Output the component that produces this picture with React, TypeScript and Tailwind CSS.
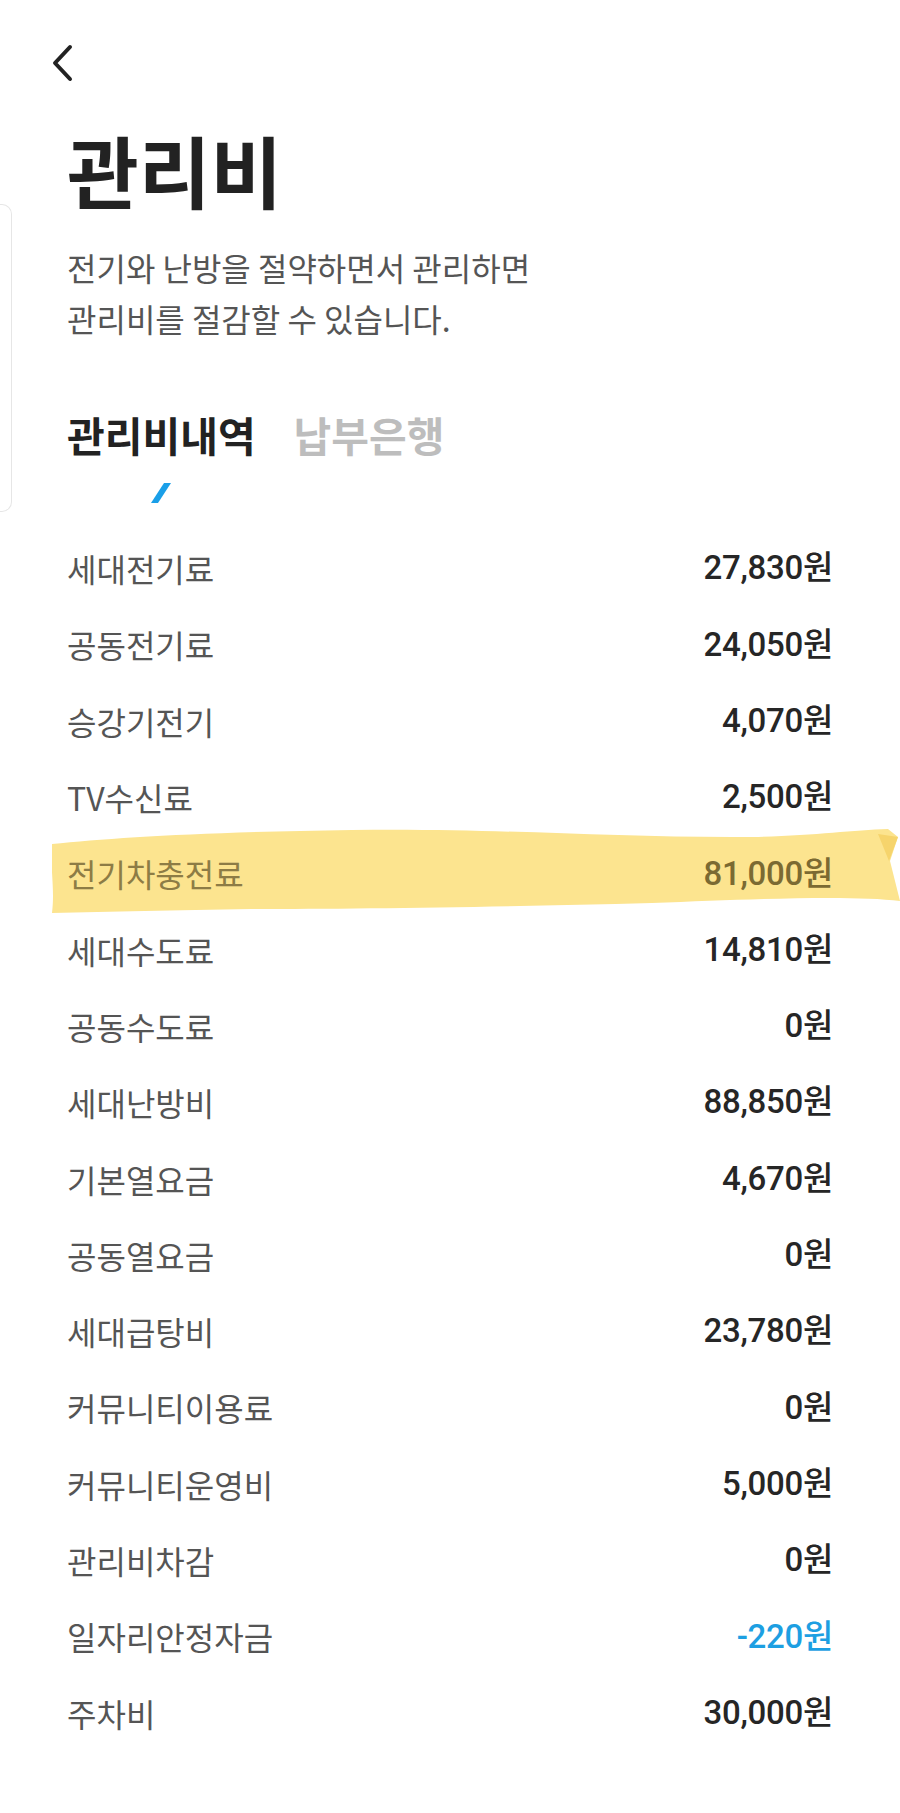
import React from "react";

type Fee = { label: string; amount: string; tone?: "blue" | "marked" };

const fees: Fee[] = [
  { label: "세대전기료", amount: "27,830원" },
  { label: "공동전기료", amount: "24,050원" },
  { label: "승강기전기", amount: "4,070원" },
  { label: "TV수신료", amount: "2,500원" },
  { label: "전기차충전료", amount: "81,000원", tone: "marked" },
  { label: "세대수도료", amount: "14,810원" },
  { label: "공동수도료", amount: "0원" },
  { label: "세대난방비", amount: "88,850원" },
  { label: "기본열요금", amount: "4,670원" },
  { label: "공동열요금", amount: "0원" },
  { label: "세대급탕비", amount: "23,780원" },
  { label: "커뮤니티이용료", amount: "0원" },
  { label: "커뮤니티운영비", amount: "5,000원" },
  { label: "관리비차감", amount: "0원" },
  { label: "일자리안정자금", amount: "-220원", tone: "blue" },
  { label: "주차비", amount: "30,000원" },
];

function Highlighter() {
  return (
    <svg
      className="absolute left-[-15px] right-[-67px] top-[-6px] h-[84px]"
      viewBox="0 0 848 84"
      preserveAspectRatio="none"
    >
      <path
        d="M0 15 C60 9 150 3 300 1 C450 -1 560 9 700 8 C760 7 800 1 836 0 L846 8 L838 32 L848 72 C800 66 700 70 600 74 C450 78 300 80 200 80 C120 81 60 83 0 84 C3 60 -2 40 0 15 Z"
        fill="#fce48f"
      />
      <path d="M826 5 L846 8 L837 32 Z" fill="#f6d46c" />
    </svg>
  );
}

function FeeRow({ fee }: { fee: Fee }) {
  const marked = fee.tone === "marked";
  const amountColor =
    fee.tone === "blue"
      ? "text-[#1d9fe2]"
      : marked
        ? "text-[#7b6a32]"
        : "text-[#262626]";

  return (
    <div className="relative flex h-[76.3px] items-center justify-between">
      {marked && <Highlighter />}
      <span
        className={`relative font-['Noto_Sans_CJK_KR',sans-serif] text-[32px] ${
          marked ? "text-[#8d7c45]" : "text-[#555555]"
        }`}
      >
        {fee.label}
      </span>
      <span
        className={`relative font-['Roboto','Noto_Sans_CJK_KR',sans-serif] text-[33px] font-medium tracking-[-0.3px] ${amountColor}`}
      >
        {fee.amount}
      </span>
    </div>
  );
}

export default function App() {
  return (
    <div className="relative min-h-[1813px] w-[900px] bg-white font-['Noto_Sans_CJK_KR',sans-serif]">
      {/* Edge panel handle */}
      <div className="absolute left-0 top-[204px] h-[308px] w-[12px] rounded-r-[10px] border border-l-0 border-[#e6e6e6]" />

      {/* Back */}
      <div className="pl-[50px] pt-[44px]">
        <svg width="24" height="38" viewBox="0 0 24 38" fill="none">
          <path
            d="M20 3 L5 19 L20 35"
            stroke="#222"
            strokeWidth="4"
            strokeLinecap="round"
            strokeLinejoin="round"
          />
        </svg>
      </div>

      <div className="px-[67px]">
        <h1 className="mt-[48px] text-[78px] font-bold leading-none text-[#222222]">
          관리비
        </h1>

        <p className="mt-[34px] text-[32px] leading-[51px] text-[#555555]">
          전기와 난방을 절약하면서 관리하면
          <br />
          관리비를 절감할 수 있습니다.
        </p>

        {/* Tabs */}
        <div className="mt-[70px] flex items-center gap-[38px] text-[41px] font-bold leading-none">
          <span className="text-[#222222]">관리비내역</span>
          <span className="text-[#bdbdbd]">납부은행</span>
        </div>
        <div className="mt-[28px] h-[20px] pl-[83px]">
          <svg width="22" height="20" viewBox="0 0 22 20">
            <path d="M14 0 L21 0 L8 20 L1 20 Z" fill="#1a9fe8" />
          </svg>
        </div>

        {/* Fee list */}
        <div className="mt-[27px]">
          {fees.map((fee) => (
            <FeeRow key={fee.label} fee={fee} />
          ))}
        </div>
      </div>
    </div>
  );
}
